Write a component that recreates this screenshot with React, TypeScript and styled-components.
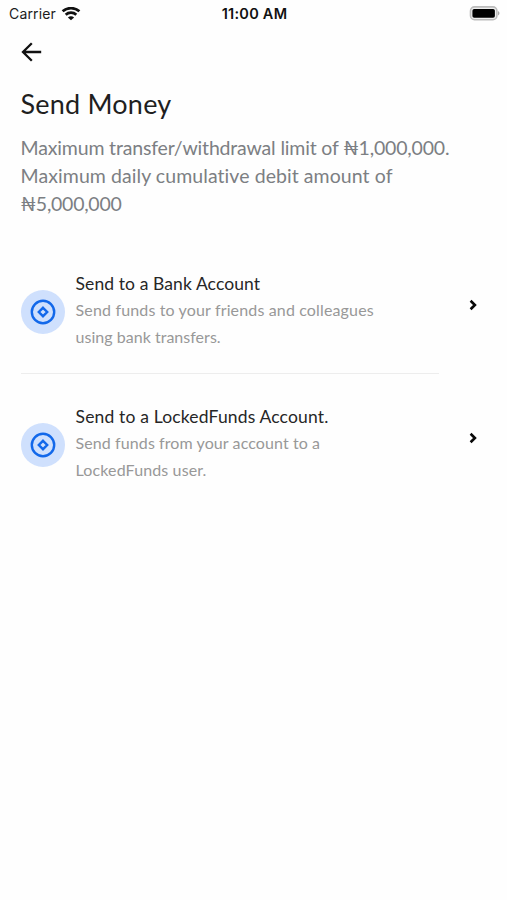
import React from "react";
import styled, { createGlobalStyle } from "styled-components";

const GlobalStyle = createGlobalStyle`
  * { box-sizing: border-box; }
  body { margin: 0; background: #fefefe; }
`;

const Screen = styled.div`
  width: 507px;
  height: 900px;
  background: #fefefe;
  font-family: Lato, "Noto Sans", sans-serif;
  color: #1f1f1f;
  overflow: hidden;
`;

const StatusBar = styled.header`
  height: 28px;
  padding: 0 7px 0 9px;
  display: grid;
  grid-template-columns: 1fr auto 1fr;
  align-items: center;
  font-family: Inter, sans-serif;
  font-size: 14px;
  line-height: 28px;
  color: #1c1c1c;
`;

const Carrier = styled.div`
  display: flex;
  align-items: center;
  gap: 5px;
  letter-spacing: 0.15px;
`;

const Clock = styled.div`
  font-size: 14.5px;
  font-weight: 600;
  letter-spacing: 0.25px;
  color: #111;
`;

const BatterySlot = styled.div`
  display: flex;
  justify-content: flex-end;
`;

const Icon = styled.svg`
  display: block;
  flex: none;
`;

const NavBar = styled.nav`
  height: 48px;
  padding: 0 19px;
  display: flex;
  align-items: center;
`;

const BackButton = styled.button`
  padding: 0;
  border: 0;
  background: none;
`;

const Main = styled.main`
  padding: 0 20.6px;
`;

const Title = styled.h1`
  margin: 9px 0 0;
  font-size: 27px;
  line-height: 38px;
  font-weight: 400;
`;

const Line = styled.span<{ $tracking?: number }>`
  display: block;
  white-space: nowrap;
  font-variant-ligatures: none;
  letter-spacing: ${(p) => p.$tracking ?? 0}px;
`;

const Limits = styled.p`
  margin: 11px 0 0;
  font-size: 19.5px;
  line-height: 28px;
  color: #7c7f83;
`;

const Options = styled.section`
  margin-top: 53px;
`;

const Option = styled.article`
  height: 133px;
  display: grid;
  grid-template-columns: 44px 372px 1fr;
`;

const Badge = styled.div`
  width: 44px;
  height: 44px;
  margin-top: 18.5px;
  border-radius: 50%;
  background: #cfe0fd;
  display: grid;
  place-items: center;
`;

const OptionText = styled.div`
  padding-left: 11px;
`;

const OptionTitle = styled.h2`
  margin: 0;
  font-size: 17.5px;
  line-height: 26px;
  font-weight: 400;
  color: #262626;
`;

const OptionNote = styled.p`
  margin: 0;
  font-size: 16px;
  line-height: 26.5px;
  color: #989898;
`;

const ChevronSlot = styled.div`
  margin: 28px 0 0 32.4px;
`;

const Divider = styled.hr`
  width: 418px;
  height: 1px;
  margin: -31px 0 30px;
  border: 0;
  background: #ededed;
`;

const Wifi = () => (
  <Icon width="20" height="15" viewBox="0 0 20 15" fill="none" stroke="#111" strokeWidth="2.7">
    <path d="M1.6 4.3C6.2.1 13.8.1 18.4 4.3" />
    <path d="M4.7 7.8c3-2.8 7.6-2.8 10.6 0" />
    <path d="M10 13.2 6.9 10.4c1.7-1.6 4.5-1.6 6.2 0z" fill="#111" stroke="none" />
  </Icon>
);

const Battery = () => (
  <Icon width="31" height="16" viewBox="0 0 31 16">
    <rect x="1.5" y=".9" width="26.4" height="12.8" rx="4" fill="#eee" stroke="#bcbcbc" strokeWidth="1.6" />
    <rect x="3.4" y="2.9" width="22.5" height="8.9" rx="1.8" fill="#000" />
    <path d="M29 5.1c2 .8 2 3.6 0 4.4z" fill="#aaa" />
  </Icon>
);

const ArrowLeft = () => (
  <Icon width="24" height="24" viewBox="0 0 24 24" fill="none" stroke="#111" strokeWidth="2.3">
    <path d="M12.8 3.2 4 12l8.8 8.8M4 12h18.2" />
  </Icon>
);

const Coin = () => (
  <Icon width="26" height="26" viewBox="0 0 26 26" fill="none" stroke="#1268ea" strokeWidth="2.4">
    <circle cx="13" cy="13" r="11.2" />
    <path d="m13 8.8 4.2 4.2-4.2 4.2L8.8 13z" />
  </Icon>
);

const Chevron = () => (
  <Icon width="9" height="12" viewBox="0 0 9 12" fill="none" stroke="#080808" strokeWidth="2.6">
    <path d="m1.6 1.8 4.3 4.2-4.3 4.2" />
  </Icon>
);

type TextLine = { text: string; tracking: number };

const limits: TextLine[] = [
  { text: "Maximum transfer/withdrawal limit of ₦1,000,000.", tracking: -0.17 },
  { text: "Maximum daily cumulative debit amount of", tracking: 0.07 },
  { text: "₦5,000,000", tracking: -0.27 },
];

const options: { title: TextLine; note: TextLine[] }[] = [
  {
    title: { text: "Send to a Bank Account", tracking: 0.09 },
    note: [
      { text: "Send funds to your friends and colleagues", tracking: 0.145 },
      { text: "using bank transfers.", tracking: 0.02 },
    ],
  },
  {
    title: { text: "Send to a LockedFunds Account.", tracking: 0.155 },
    note: [
      { text: "Send funds from your account to a", tracking: 0.09 },
      { text: "LockedFunds user.", tracking: 0.12 },
    ],
  },
];

const Lines = ({ items }: { items: TextLine[] }) => (
  <>
    {items.map((l) => (
      <Line key={l.text} $tracking={l.tracking}>{l.text}</Line>
    ))}
  </>
);

export default function App() {
  return (
    <Screen>
      <GlobalStyle />
      <StatusBar>
        <Carrier>Carrier <Wifi /></Carrier>
        <Clock>11:00 AM</Clock>
        <BatterySlot><Battery /></BatterySlot>
      </StatusBar>
      <NavBar>
        <BackButton aria-label="Back"><ArrowLeft /></BackButton>
      </NavBar>
      <Main>
        <Title><Line $tracking={0.2}>Send Money</Line></Title>
        <Limits><Lines items={limits} /></Limits>
        <Options>
          {options.map((o, i) => (
            <React.Fragment key={o.title.text}>
              {i > 0 && <Divider />}
              <Option>
                <Badge><Coin /></Badge>
                <OptionText>
                  <OptionTitle><Lines items={[o.title]} /></OptionTitle>
                  <OptionNote><Lines items={o.note} /></OptionNote>
                </OptionText>
                <ChevronSlot><Chevron /></ChevronSlot>
              </Option>
            </React.Fragment>
          ))}
        </Options>
      </Main>
    </Screen>
  );
}
